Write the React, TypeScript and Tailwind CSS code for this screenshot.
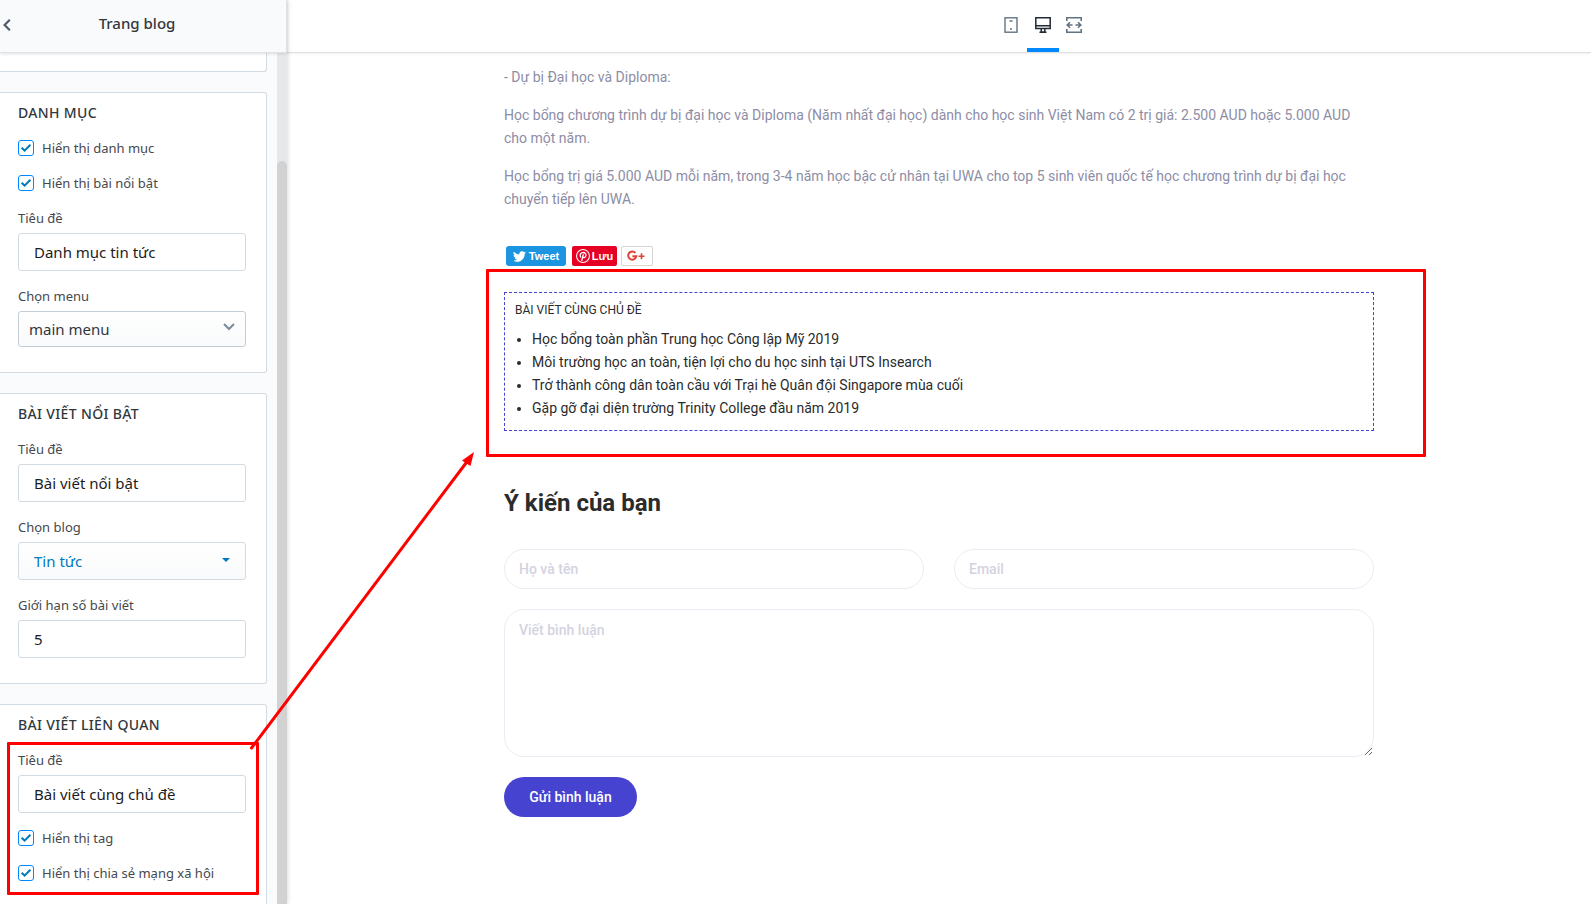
import type { ReactNode } from "react"

interface FieldProps {
  id: string
  label: string
  children: ReactNode
}

interface InputFieldProps {
  id: string
  label: string
  value: string
}

interface CheckFieldProps {
  id: string
  label: string
}

const relatedPosts = [
  "Học bổng toàn phần Trung học Công lập Mỹ 2019",
  "Môi trường học an toàn, tiện lợi cho du học sinh tại UTS Insearch",
  "Trở thành công dân toàn cầu với Trại hè Quân đội Singapore mùa cuối",
  "Gặp gỡ đại diện trường Trinity College đầu năm 2019",
]

function Card({ title, children }: { title: string; children: ReactNode }) {
  return (
    <section className="flex flex-col gap-[15px] rounded-r-[3px] border border-l-0 border-[#d3dbe2] bg-white pt-2.5 pr-5 pb-[25px] pl-[18px]">
      <h2 className="text-sm leading-5 font-medium tracking-wide text-[#31373d] uppercase">{title}</h2>
      {children}
    </section>
  )
}

function Field({ id, label, children }: FieldProps) {
  return (
    <div className="flex flex-col gap-[5px]">
      <label htmlFor={id} className="text-[13px] leading-5 text-[#45494e]">{label}</label>
      {children}
    </div>
  )
}

function InputField({ id, label, value }: InputFieldProps) {
  return (
    <Field id={id} label={label}>
      <input
        id={id}
        type="text"
        defaultValue={value}
        className="h-[38px] w-full rounded-[3px] border border-[#d3dbe2] bg-white px-[15px] text-[15px] text-[#1c1c1c] outline-none"
      />
    </Field>
  )
}

function CheckField({ id, label }: CheckFieldProps) {
  return (
    <div className="flex h-5 items-center gap-2">
      <span className="relative size-4">
        <input
          id={id}
          type="checkbox"
          defaultChecked
          className="peer block size-4 appearance-none rounded-[3px] border border-[#0088ff] bg-white"
        />
        <svg
          viewBox="0 0 16 16"
          className="pointer-events-none absolute inset-0 hidden size-4 peer-checked:block"
          fill="none"
          stroke="#0078bd"
          strokeWidth="2"
        >
          <path d="M3.6 7.8 L6.6 10.6 L12.4 4.8" />
        </svg>
      </span>
      <label htmlFor={id} className="text-[13px] leading-5 text-[#45494e]">{label}</label>
    </div>
  )
}

function Sidebar() {
  return (
    <aside className="z-10 flex w-[287px] shrink-0 flex-col bg-[#fafbfc] font-['Noto_Sans',sans-serif] text-[#31373d] shadow-[0_0_5px_rgba(0,0,0,0.2)]">
      <header className="z-10 flex h-[53px] shrink-0 items-center border-r border-b border-[#dfe3e8] bg-[#f9fafb] shadow-[0_1px_3px_rgba(0,0,0,0.12)]">
        <button type="button" aria-label="Quay lại" className="w-5 pb-0.5 pl-[3px]">
          <svg width="8" height="12" viewBox="0 0 8 12" fill="none" stroke="#4f5b67" strokeWidth="2.2">
            <path d="M6.8 0.8 L1.6 6 L6.8 11.2" />
          </svg>
        </button>
        <h1 className="flex-1 pr-8 pb-1.5 text-center text-[15px] leading-5 font-medium">Trang blog</h1>
      </header>

      <div className="flex min-h-0 flex-1">
        <div className="flex min-w-0 flex-1 flex-col gap-5 overflow-hidden pr-2.5">
          <div className="h-[19px] shrink-0 rounded-br-[3px] border-r border-b border-[#d3dbe2] bg-white" />

          <Card title="Danh mục">
            <CheckField id="show-category" label="Hiển thị danh mục" />
            <CheckField id="show-featured" label="Hiển thị bài nổi bật" />
            <InputField id="category-title" label="Tiêu đề" value="Danh mục tin tức" />
            <Field id="menu" label="Chọn menu">
              <div className="relative">
                <select
                  id="menu"
                  className="block h-9 w-full appearance-none rounded-[3px] border border-[#c4cdd5] bg-linear-to-b from-white to-[#f9fafb] px-2.5 text-[15px]"
                >
                  <option>main menu</option>
                </select>
                <svg
                  className="pointer-events-none absolute top-3 right-[11px]"
                  width="12"
                  height="8"
                  viewBox="0 0 12 8"
                  fill="none"
                  stroke="#798c9c"
                  strokeWidth="2"
                >
                  <path d="M1 1 L6 6 L11 1" />
                </svg>
              </div>
            </Field>
          </Card>

          <Card title="Bài viết nổi bật">
            <InputField id="featured-title" label="Tiêu đề" value="Bài viết nổi bật" />
            <Field id="blog" label="Chọn blog">
              <div className="relative">
                <select
                  id="blog"
                  className="block h-[38px] w-full appearance-none rounded-[3px] border border-[#d3dbe2] bg-linear-to-b from-white to-[#f9fafb] px-[15px] text-[15px] text-[#0078bd]"
                >
                  <option>Tin tức</option>
                </select>
                <svg
                  className="pointer-events-none absolute top-4 right-4"
                  width="8"
                  height="4"
                  viewBox="0 0 8 4"
                  fill="#0078bd"
                >
                  <path d="M0 0 H8 L4 4 Z" />
                </svg>
              </div>
            </Field>
            <InputField id="featured-limit" label="Giới hạn số bài viết" value="5" />
          </Card>

          <Card title="Bài viết liên quan">
            <div className="relative flex flex-col gap-[15px]">
              <InputField id="related-title" label="Tiêu đề" value="Bài viết cùng chủ đề" />
              <CheckField id="show-tag" label="Hiển thị tag" />
              <CheckField id="show-share" label="Hiển thị chia sẻ mạng xã hội" />
              {/* Highlight frame */}
              <div className="pointer-events-none absolute -top-2 -right-[13px] -bottom-3 -left-[11px] rounded-[1px] border-3 border-[#ff0000]" />
            </div>
          </Card>
        </div>

        {/* Scrollbar */}
        <div className="w-2.5 bg-[#e6e8ea] pt-[108px]">
          <div className="h-full rounded-t-[5px] bg-[#d2d2d2]" />
        </div>
      </div>
    </aside>
  )
}

function Toolbar() {
  return (
    <header className="flex h-[53px] shrink-0 justify-center border-b border-[#dfe0e2] bg-white pl-[206px] shadow-[0_1px_2px_rgba(0,0,0,0.06)]">
      <button type="button" aria-label="Di động" className="flex w-[31px] justify-center pt-[17px]">
        <svg width="16" height="16" viewBox="0 0 16 16" fill="none" stroke="#637381">
          <rect x="2" y="0.8" width="12" height="14.4" strokeWidth="1.4" />
          <path d="M6.5 4 H9.5 M7 12 H9" strokeWidth="1.4" />
        </svg>
      </button>
      <button type="button" aria-label="Máy tính" className="flex w-8 justify-center border-b-4 border-[#0088ff] pt-[17px]">
        <svg width="16" height="16" viewBox="0 0 16 16" fill="none" stroke="#212b36">
          <path d="M0.8 0.8 H15.2 V11.6 H0.8 Z M1 8.8 H15" strokeWidth="1.5" />
          <path d="M6.2 12 V15 H9.8 V12 M4.5 15.2 H11.5" strokeWidth="1.5" />
        </svg>
      </button>
      <button type="button" aria-label="Toàn màn hình" className="flex w-[30px] justify-center pt-[17px]">
        <svg width="16" height="16" viewBox="0 0 16 16" fill="none" stroke="#637381" strokeWidth="1.6">
          <path d="M0.8 4 V0.8 H15.2 V4 M0.8 12 V15.2 H15.2 V12" />
          <path d="M1.5 8 H6.5 M9.5 8 H14.5 M4 5.2 L1.2 8 L4 10.8 M12 5.2 L14.8 8 L12 10.8" />
        </svg>
      </button>
    </header>
  )
}

function ShareButtons() {
  return (
    <div className="mt-[35px] flex h-5 pl-0.5 text-[11px] font-bold text-white">
      <button type="button" className="mr-1.5 flex w-[60px] items-center justify-center gap-[3px] rounded-[3px] bg-[#1b95e0] font-['Liberation_Sans',sans-serif]">
        <svg width="13" height="13" viewBox="0 0 24 24" fill="currentColor">
          <path d="M23.95 4.57a10 10 0 0 1-2.82.77 4.96 4.96 0 0 0 2.16-2.72c-.95.55-2 .95-3.13 1.18a4.92 4.92 0 0 0-8.38 4.48A13.98 13.98 0 0 1 1.64 3.16a4.92 4.92 0 0 0 1.52 6.57 4.9 4.9 0 0 1-2.22-.61v.06a4.92 4.92 0 0 0 3.94 4.83 5 5 0 0 1-2.21.08 4.94 4.94 0 0 0 4.6 3.42A9.87 9.87 0 0 1 0 19.54a13.99 13.99 0 0 0 7.55 2.21c9.05 0 14-7.5 14-13.98 0-.21 0-.42-.02-.63a9.94 9.94 0 0 0 2.46-2.55z" />
        </svg>
        Tweet
      </button>
      <button type="button" className="mr-1 flex w-[45px] items-center justify-center gap-0.5 rounded-[2px] bg-[#e60023] font-['Liberation_Sans',sans-serif]">
        <svg width="14" height="14" viewBox="0 0 24 24" fill="none" stroke="currentColor" strokeLinecap="round">
          <circle cx="12" cy="12" r="11" strokeWidth="1.8" />
          <path d="M8.2 13.8 C5.5 9.5 8.5 6 12.3 6 C16 6 17.8 8.8 16.8 12 C15.8 15.2 12.6 15.6 11.4 13.6 M12.4 9.8 L9.8 20" strokeWidth="2.2" />
        </svg>
        Lưu
      </button>
      <button type="button" aria-label="Google+" className="flex w-8 items-center rounded-[2px] border border-[#d4d4d4] bg-white pl-[5px]">
        <svg width="18" height="12" viewBox="0 0 18 12" fill="none" stroke="#db4437" strokeWidth="2">
          <path d="M8.4 2.8 A4.1 4.1 0 1 0 9.4 6.2 H5.4" />
          <path d="M14.5 3.2 V9.2 M11.5 6.2 H17.5" strokeWidth="1.6" />
        </svg>
      </button>
    </div>
  )
}

function RelatedPosts() {
  return (
    <section className="relative mt-[26px]">
      <div className="border border-dashed border-[#4743d1] px-2.5 pt-1.5 pb-2.5 text-sm leading-[23px] text-[#2b2b2b]">
        <h3 className="mb-1.5 text-xs leading-[23px] uppercase">Bài viết cùng chủ đề</h3>
        <ul className="list-disc pl-[17px]">
          {relatedPosts.map(post => (
            <li key={post}>
              <a href="#">{post}</a>
            </li>
          ))}
        </ul>
      </div>
      {/* Highlight frame */}
      <div className="pointer-events-none absolute -top-[23px] -right-[52px] -bottom-[26px] -left-[18px] rounded-[1px] border-3 border-[#ff0000]" />
    </section>
  )
}

function CommentForm() {
  const box = "border border-[#ebebf3] bg-white px-3.5 text-sm font-medium placeholder:text-[#d3d3df] outline-none"

  return (
    <form className="mt-[56px]" onSubmit={e => e.preventDefault()}>
      <h2 className="text-2xl leading-8 font-bold text-[#2b2b2b]">Ý kiến của bạn</h2>
      <div className="mt-[30px] grid grid-cols-2 gap-x-[30px] gap-y-5">
        <input type="text" aria-label="Họ và tên" placeholder="Họ và tên" className={`${box} h-10 rounded-[20px]`} />
        <input type="email" aria-label="Email" placeholder="Email" className={`${box} h-10 rounded-[20px]`} />
        <textarea
          aria-label="Viết bình luận"
          placeholder="Viết bình luận"
          className={`${box} col-span-2 block h-[148px] rounded-[20px] py-2.5`}
        />
      </div>
      <button type="submit" className="mt-5 h-10 w-[133px] rounded-[20px] bg-[#4743d1] text-sm font-medium text-white">
        Gửi bình luận
      </button>
    </form>
  )
}

export default function App() {
  return (
    <div className="relative flex h-screen overflow-hidden bg-white">
      <Sidebar />
      <div className="flex min-w-0 flex-1 flex-col">
        <Toolbar />
        <main className="mx-auto w-full max-w-[870px] pt-[13px] font-[Roboto,sans-serif]">
          <div className="flex flex-col gap-[15px] text-sm leading-[23px] text-[#8d8da6]">
            <p>- Dự bị Đại học và Diploma:</p>
            <p>
              Học bổng chương trình dự bị đại học và Diploma (Năm nhất đại học) dành cho học sinh Việt Nam có 2 trị
              giá: 2.500 AUD hoặc 5.000 AUD cho một năm.
            </p>
            <p>
              Học bổng trị giá 5.000 AUD mỗi năm, trong 3-4 năm học bậc cử nhân tại UWA cho top 5 sinh viên quốc tế
              học chương trình dự bị đại học chuyển tiếp lên UWA.
            </p>
          </div>
          <ShareButtons />
          <RelatedPosts />
          <CommentForm />
        </main>
      </div>

      {/* Arrow from the settings to the block they control */}
      <svg
        className="pointer-events-none absolute top-[450px] left-[248px] z-20"
        width="230"
        height="302"
        viewBox="0 0 230 302"
      >
        <path d="M3.5 298 L218 13" stroke="#ff0000" strokeWidth="3" strokeLinecap="round" />
        <path d="M226 2 L222.5 16 L218.5 13.5 L214 10.5 Z" fill="#ff0000" />
      </svg>
    </div>
  )
}
